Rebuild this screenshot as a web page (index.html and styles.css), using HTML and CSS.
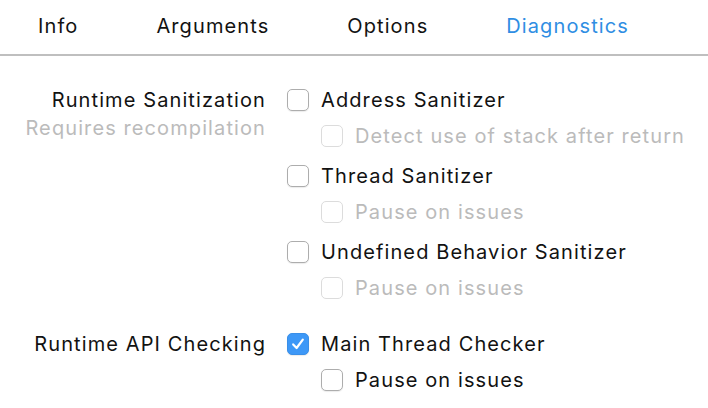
FILE: index.html
```html
<!DOCTYPE html>
<html>
<head>
<meta charset="utf-8">
<link rel="stylesheet" href="styles.css">
</head>
<body>
<nav class="tabs">
  <span class="tab">Info</span>
  <span class="tab">Arguments</span>
  <span class="tab">Options</span>
  <span class="tab active">Diagnostics</span>
</nav>
<main class="form">
  <section class="group">
    <div class="label">
      <div class="title">Runtime Sanitization</div>
      <div class="hint">Requires recompilation</div>
    </div>
    <div class="options">
      <div class="row"><span class="box"></span><span>Address Sanitizer</span></div>
      <div class="row sub disabled"><span class="box"></span><span>Detect use of stack after return</span></div>
      <div class="row"><span class="box"></span><span>Thread Sanitizer</span></div>
      <div class="row sub disabled"><span class="box"></span><span>Pause on issues</span></div>
      <div class="row"><span class="box"></span><span>Undefined Behavior Sanitizer</span></div>
      <div class="row sub disabled"><span class="box"></span><span>Pause on issues</span></div>
    </div>
  </section>
  <section class="group">
    <div class="label">
      <div class="title">Runtime API Checking</div>
    </div>
    <div class="options">
      <div class="row"><span class="box checked"><svg viewBox="0 0 22 22" width="22" height="22"><path d="M6.2 11.4 L9.6 15 L15.8 6.6" fill="none" stroke="#fff" stroke-width="2.2" stroke-linecap="round" stroke-linejoin="round"/></svg></span><span>Main Thread Checker</span></div>
      <div class="row sub"><span class="box"></span><span>Pause on issues</span></div>
    </div>
  </section>
</main>
</body>
</html>
```

FILE: styles.css
```css
* { box-sizing: border-box; }
html, body {
  margin: 0;
  padding: 0;
  background: #fff;
}
body {
  font-family: Inter, "Liberation Sans", Arial, sans-serif;
  font-size: 20px;
  letter-spacing: 1.1px;
  color: #121212;
  width: 708px;
  height: 408px;
  overflow: hidden;
}
.tabs {
  display: flex;
  gap: 78px;
  padding-left: 38px;
  height: 56px;
  line-height: 52px;
  border-bottom: 2px solid #bfbfbf;
}
.tab { color: #121212; }
.tab.active { color: #2f8ee3; }

.form {
  padding-top: 26px;
  display: flex;
  flex-direction: column;
  gap: 16px;
}
.group {
  display: grid;
  grid-template-columns: 266px 1fr;
  column-gap: 21px;
}
.label { text-align: right; }
.title { line-height: 36px; }
.hint { line-height: 20px; color: #bbbbbb; }

.options { display: flex; flex-direction: column; }
.row {
  display: flex;
  align-items: center;
  gap: 12px;
  height: 36px;
}
.row.sub { padding-left: 34px; margin-bottom: 4px; }
.group:last-child .row.sub { margin-bottom: 0; }
.row.disabled { color: #bbbbbb; }

.box {
  width: 22px;
  height: 22px;
  border: 1px solid #adadad;
  border-radius: 5px;
  background: #fff;
  box-shadow: 0 1px 1px rgba(0,0,0,0.08);
  flex: none;
  display: block;
}
.row.disabled .box { border-color: #dcdcdc; box-shadow: none; }
.box.checked {
  background: #3d98f7;
  border-color: #3a8fe8;
}
.box.checked svg { display: block; margin: -1px; }
```
